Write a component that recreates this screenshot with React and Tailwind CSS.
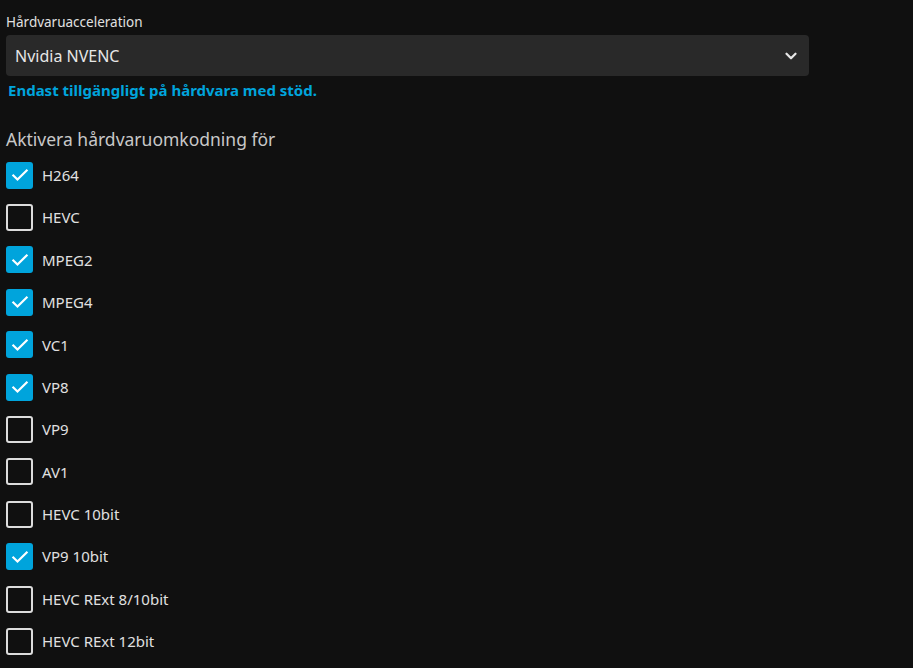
import React from "react";

const items = [
  ["H264", true],
  ["HEVC", false],
  ["MPEG2", true],
  ["MPEG4", true],
  ["VC1", true],
  ["VP8", true],
  ["VP9", false],
  ["AV1", false],
  ["HEVC 10bit", false],
  ["VP9 10bit", true],
  ["HEVC RExt 8/10bit", false],
  ["HEVC RExt 12bit", false],
];

function Box({ checked }) {
  if (checked) {
    return (
      <div className="w-[27px] h-[27px] rounded-[3px] bg-[#00a4dc] flex items-center justify-center shrink-0">
        <svg width="20" height="20" viewBox="0 0 24 24" fill="none" stroke="#fff" strokeWidth="2.6" strokeLinecap="square">
          <path d="M4 12.5l5 5L20 6.5" />
        </svg>
      </div>
    );
  }
  return <div className="w-[27px] h-[27px] rounded-[3px] border-2 border-[#dcdcdc] shrink-0" />;
}

export default function App() {
  return (
    <div className="w-[913px] h-[668px] bg-[#101010] text-[#e6e6e6] overflow-hidden pl-[6px]" style={{ fontFamily: '"Noto Sans", sans-serif' }}>
      <div className="pt-[12px] text-[13.5px] leading-[20px] text-[#e0e0e0]">Hårdvaruacceleration</div>
      <div className="mt-[3px] w-[803px] h-[41px] rounded-[4px] bg-[#292929] flex items-center justify-between pl-[9px] pr-[9px]">
        <span className="text-[16px] text-[#e6e6e6]">Nvidia NVENC</span>
        <svg width="18" height="18" viewBox="0 0 24 24" fill="none" stroke="#e6e6e6" strokeWidth="3" strokeLinecap="round" strokeLinejoin="round">
          <path d="M6 9l6 6 6-6" />
        </svg>
      </div>
      <div className="mt-[4px] pl-[2px] text-[15px] leading-[20px] font-bold text-[#00a4dc]">Endast tillgängligt på hårdvara med stöd.</div>
      <div className="mt-[27px] text-[17.5px] leading-[24px] text-[#c8c8c8]">Aktivera hårdvaruomkodning för</div>
      <div className="mt-[3px] flex flex-col">
        {items.map(([label, checked]) => (
          <div key={label} className="h-[42.4px] flex items-center gap-[9px]">
            <Box checked={checked} />
            <span className="text-[15px] text-[#e0e0e0]">{label}</span>
          </div>
        ))}
      </div>
    </div>
  );
}
